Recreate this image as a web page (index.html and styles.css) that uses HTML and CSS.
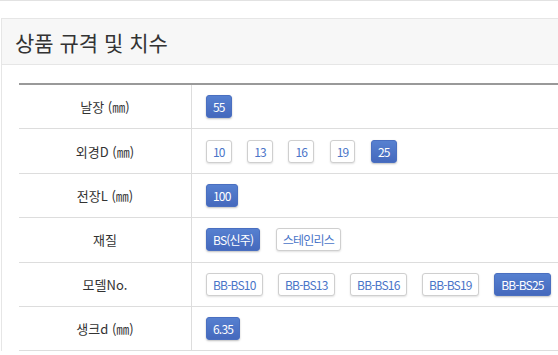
FILE: index.html
```html
<!DOCTYPE html>
<html lang="ko">
<head>
<meta charset="utf-8">
<link rel="stylesheet" href="styles.css">
</head>
<body>
<div class="topline"></div>
<section class="panel">
  <h2 class="panel-title">상품 규격 및 치수</h2>
  <div class="panel-body">
    <table class="spec">
      <tr>
        <th>날장 (㎜)</th>
        <td><span class="opt on">55</span></td>
      </tr>
      <tr>
        <th>외경D (㎜)</th>
        <td><span class="opt">10</span><span class="opt">13</span><span class="opt">16</span><span class="opt">19</span><span class="opt on">25</span></td>
      </tr>
      <tr>
        <th>전장L (㎜)</th>
        <td><span class="opt on">100</span></td>
      </tr>
      <tr>
        <th>재질</th>
        <td><span class="opt on">BS(신주)</span><span class="opt">스테인리스</span></td>
      </tr>
      <tr>
        <th>모델No.</th>
        <td><span class="opt">BB-BS10</span><span class="opt">BB-BS13</span><span class="opt">BB-BS16</span><span class="opt">BB-BS19</span><span class="opt on">BB-BS25</span></td>
      </tr>
      <tr>
        <th>생크d (㎜)</th>
        <td><span class="opt on">6.35</span></td>
      </tr>
    </table>
  </div>
</section>
</body>
</html>
```
FILE: styles.css
```css
html, body {
  margin: 0;
  padding: 0;
  background: #fff;
  overflow: hidden;
}
body {
  font-family: "Noto Sans CJK KR", "Noto Sans", sans-serif;
  color: #333;
  width: 558px;
  height: 355px;
}
.topline {
  height: 1px;
  background: #e2e2e2;
}
.panel {
  margin: 17px 0 0 1px;
  width: 640px;
  border: 1px solid #e6e6e6;
  border-right: none;
  border-bottom: none;
}
.panel-title {
  margin: 0;
  height: 46px;
  box-sizing: border-box;
  padding-left: 13px;
  background: #f7f7f7;
  border-bottom: 1px solid #e6e6e6;
  font-size: 21px;
  font-weight: 400;
  line-height: 47px;
  color: #333;
}
.panel-body {
  padding: 18px 0 0 17px;
}
.spec {
  width: 620px;
  border-collapse: collapse;
  border-top: 2px solid #999;
}
.spec th, .spec td {
  height: 43.4px;
  padding: 0;
  border-bottom: 1px solid #dddddd;
  vertical-align: middle;
}
.spec th {
  width: 172px;
  font-weight: 400;
  font-size: 13px;
  color: #333;
  text-align: center;
  border-right: 1px solid #dddddd;
}
.spec td {
  padding-left: 14px;
  font-size: 0;
}
.opt {
  display: inline-block;
  box-sizing: border-box;
  height: 23px;
  line-height: 21px;
  padding: 0 6px;
  margin-right: 15.5px;
  font-size: 12px;
  color: #4a74c8;
  background: #fff;
  border: 1px solid #cfcfcf;
  border-radius: 3px;
  box-shadow: 0 1px 2px rgba(0,0,0,0.12);
  vertical-align: middle;
  letter-spacing: -0.8px;
}
.opt.on {
  color: #fff;
  background: linear-gradient(#5680d0, #4569bd);
  border-color: #4a6fc0;
  box-shadow: 0 1px 2px rgba(0,0,0,0.25);
}
```
